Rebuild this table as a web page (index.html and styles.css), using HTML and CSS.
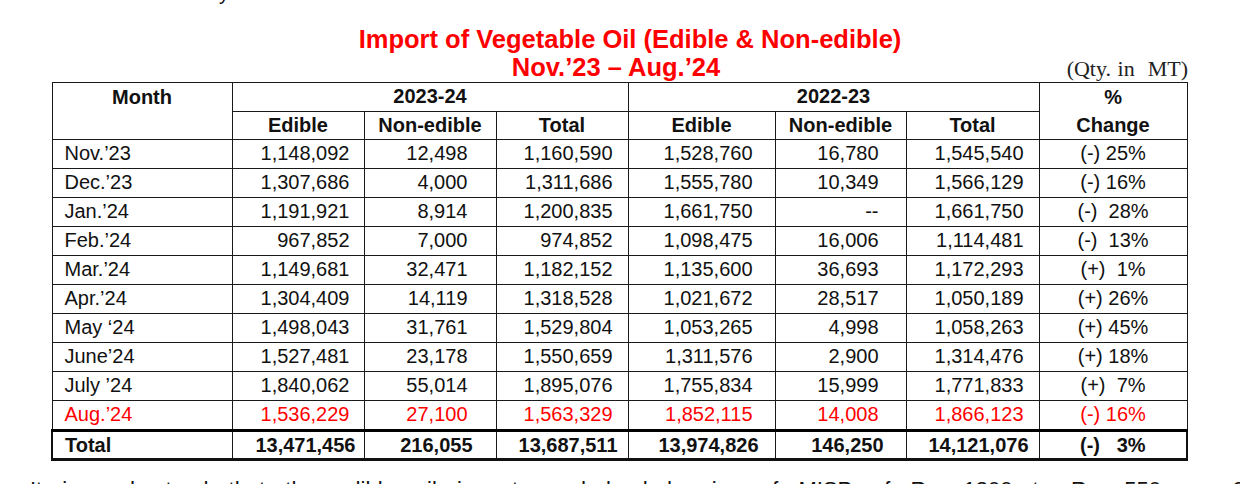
FILE: index.html
```html
<!DOCTYPE html>
<html lang="en">
<head>
<meta charset="utf-8">
<title>Import of Vegetable Oil</title>
<link rel="stylesheet" href="styles.css">
</head>
<body>
<div class="cut-top"><span class="cut-glyph">y</span></div>
<header class="heading">
  <h1 class="title">Import of Vegetable Oil (Edible &amp; Non-edible)</h1>
  <div class="subline">
    <span></span>
    <h2 class="period">Nov.’23 – Aug.’24</h2>
    <span class="unit">(Qty. in&nbsp; MT)</span>
  </div>
</header>
<table class="data">
  <colgroup>
    <col class="c-month"><col class="c-a"><col class="c-b"><col class="c-c"><col class="c-d"><col class="c-e"><col class="c-f"><col class="c-g">
  </colgroup>
  <thead>
    <tr>
      <th rowspan="2" class="th-month">Month</th>
      <th colspan="3">2023-24</th>
      <th colspan="3">2022-23</th>
      <th rowspan="2" class="th-change">%<br>Change</th>
    </tr>
    <tr>
      <th>Edible</th><th>Non-edible</th><th>Total</th>
      <th>Edible</th><th>Non-edible</th><th>Total</th>
    </tr>
  </thead>
  <tbody>
    <tr><td>Nov.’23</td><td class="n1">1,148,092</td><td class="n2">12,498</td><td class="n3">1,160,590</td><td class="n4">1,528,760</td><td class="n5">16,780</td><td class="n6">1,545,540</td><td class="pc">(-) 25%</td></tr>
    <tr><td>Dec.’23</td><td class="n1">1,307,686</td><td class="n2">4,000</td><td class="n3">1,311,686</td><td class="n4">1,555,780</td><td class="n5">10,349</td><td class="n6">1,566,129</td><td class="pc">(-) 16%</td></tr>
    <tr><td>Jan.’24</td><td class="n1">1,191,921</td><td class="n2">8,914</td><td class="n3">1,200,835</td><td class="n4">1,661,750</td><td class="n5">--</td><td class="n6">1,661,750</td><td class="pc">(-)&nbsp; 28%</td></tr>
    <tr><td>Feb.’24</td><td class="n1">967,852</td><td class="n2">7,000</td><td class="n3">974,852</td><td class="n4">1,098,475</td><td class="n5">16,006</td><td class="n6">1,114,481</td><td class="pc">(-)&nbsp; 13%</td></tr>
    <tr><td>Mar.’24</td><td class="n1">1,149,681</td><td class="n2">32,471</td><td class="n3">1,182,152</td><td class="n4">1,135,600</td><td class="n5">36,693</td><td class="n6">1,172,293</td><td class="pc">(+)&nbsp; 1%</td></tr>
    <tr><td>Apr.’24</td><td class="n1">1,304,409</td><td class="n2">14,119</td><td class="n3">1,318,528</td><td class="n4">1,021,672</td><td class="n5">28,517</td><td class="n6">1,050,189</td><td class="pc">(+) 26%</td></tr>
    <tr><td>May ‘24</td><td class="n1">1,498,043</td><td class="n2">31,761</td><td class="n3">1,529,804</td><td class="n4">1,053,265</td><td class="n5">4,998</td><td class="n6">1,058,263</td><td class="pc">(+) 45%</td></tr>
    <tr><td>June’24</td><td class="n1">1,527,481</td><td class="n2">23,178</td><td class="n3">1,550,659</td><td class="n4">1,311,576</td><td class="n5">2,900</td><td class="n6">1,314,476</td><td class="pc">(+) 18%</td></tr>
    <tr><td>July ’24</td><td class="n1">1,840,062</td><td class="n2">55,014</td><td class="n3">1,895,076</td><td class="n4">1,755,834</td><td class="n5">15,999</td><td class="n6">1,771,833</td><td class="pc">(+)&nbsp; 7%</td></tr>
    <tr class="hl"><td>Aug.’24</td><td class="n1">1,536,229</td><td class="n2">27,100</td><td class="n3">1,563,329</td><td class="n4">1,852,115</td><td class="n5">14,008</td><td class="n6">1,866,123</td><td class="pc">(-) 16%</td></tr>
  </tbody>
  <tfoot>
    <tr class="total"><td>Total</td><td class="n1">13,471,456</td><td class="n2">216,055</td><td class="n3">13,687,511</td><td class="n4">13,974,826</td><td class="n5">146,250</td><td class="n6">14,121,076</td><td class="pc">(-)&nbsp;&nbsp; 3%</td></tr>
  </tfoot>
</table>
<p class="after">It is understood that the edible oil imports and landed price of MISP of Rs. 1300 to Rs. 550 per 800</p>
</body>
</html>
```

FILE: styles.css
```css
html, body {
  margin: 0;
  padding: 0;
  background: #ffffff;
}
body {
  width: 1240px;
  height: 484px;
  overflow: hidden;
  font-family: "Liberation Sans", Arial, sans-serif;
  color: #111;
}
.cut-top {
  height: 4px;
  overflow: hidden;
  padding-left: 219px;
}
.cut-glyph {
  display: block;
  font-size: 20px;
  line-height: 20px;
  margin-top: -17px;
}
.heading {
  margin-top: 21px;
  width: 1240px;
}
.title {
  margin: 0;
  padding-left: 20px;
  text-align: center;
  font-size: 25.5px;
  line-height: 28px;
  font-weight: bold;
  color: #ff0000;
}
.subline {
  display: grid;
  grid-template-columns: 1fr auto 1fr;
  align-items: baseline;
}
.period {
  margin: 0;
  font-size: 25.5px;
  line-height: 28px;
  font-weight: bold;
  color: #ff0000;
  transform: translateX(-4px);
}
.unit {
  justify-self: end;
  padding-right: 52px;
  font-family: "Liberation Serif", "Times New Roman", serif;
  font-size: 22px;
  word-spacing: 1px;
  color: #222;
}
.data {
  margin-left: 51px;
  width: 1135px;
  table-layout: fixed;
  border-collapse: collapse;
  font-size: 20px;
}
.c-month { width: 180px; }
.c-a { width: 132px; }
.c-b { width: 132px; }
.c-c { width: 132px; }
.c-d { width: 147px; }
.c-e { width: 131px; }
.c-f { width: 133px; }
.c-g { width: 148px; }
.data th, .data td {
  border: 1px solid #1a1a1a;
  padding: 0;
  white-space: nowrap;
}
.data th {
  height: 27px;
  line-height: 27px;
  font-weight: bold;
  text-align: center;
  vertical-align: middle;
}
.data .th-month, .data .th-change {
  vertical-align: top;
  line-height: 28px;
}
.data td {
  height: 26px;
  line-height: 22px;
  padding-bottom: 2px;
  vertical-align: middle;
  text-align: right;
}
.data td:first-child {
  text-align: left;
  padding-left: 12px;
}
.data td.n1 { padding-right: 14px; }
.data td.n2 { padding-right: 28px; }
.data td.n3 { padding-right: 15px; }
.data td.n4 { padding-right: 22px; }
.data td.n5 { padding-right: 27px; }
.data td.n6 { padding-right: 15px; }
.data td.pc { text-align: center; }
.data tr.hl td { color: #ff0000; }
.data tr.total td {
  font-weight: bold;
  border-top: 3px solid #000;
  border-bottom: 3px solid #111;
  height: 25px;
  padding-bottom: 1px;
}
.data tr.total td:first-child { border-left: 2px solid #111; }
.data tr.total td:last-child { border-right: 2px solid #111; }
.data tr.total td.n1 { padding-right: 8px; }
.data tr.total td.n2 { padding-right: 23px; }
.data tr.total td.n3 { padding-right: 10px; }
.data tr.total td.n4 { padding-right: 16px; }
.data tr.total td.n5 { padding-right: 22px; }
.data tr.total td.n6 { padding-right: 10px; }
.after {
  margin: 16px 0 0 30px;
  font-size: 22px;
  word-spacing: 14px;
  white-space: nowrap;
  color: #111;
}
```
